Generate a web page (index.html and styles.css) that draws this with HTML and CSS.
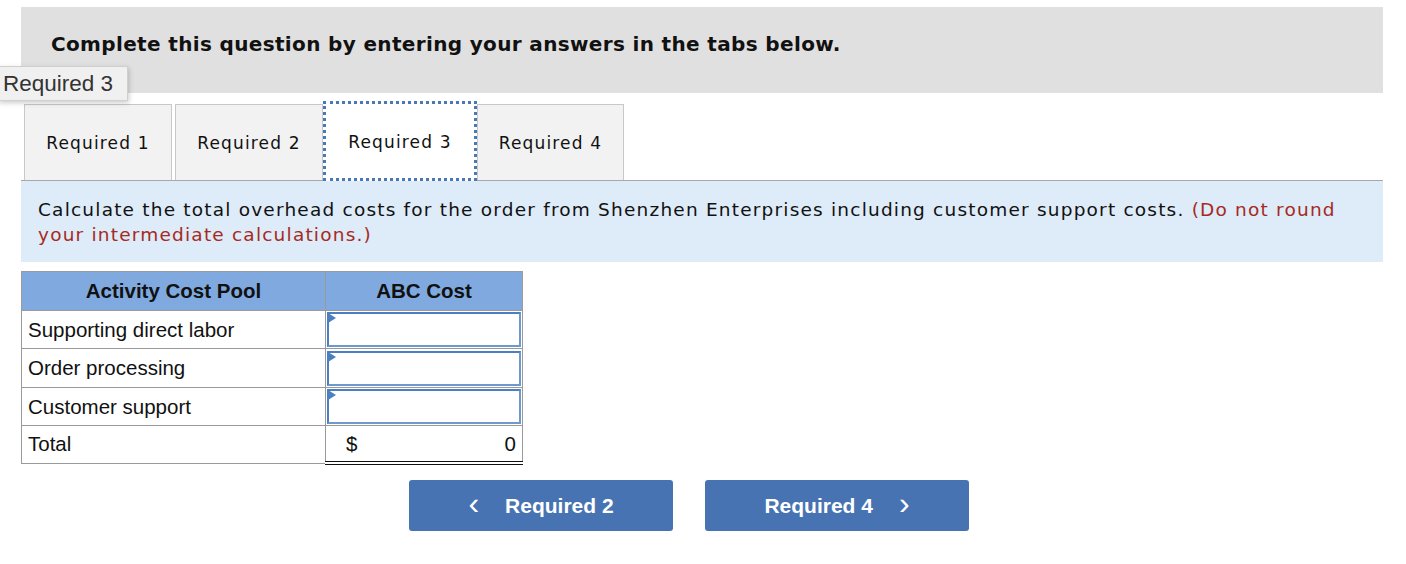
FILE: index.html
```html
<!DOCTYPE html>
<html>
<head>
<meta charset="utf-8">
<link rel="stylesheet" href="styles.css">
</head>
<body>
<div class="page">
  <div class="header">
    <h1 class="title">Complete this question by entering your answers in the tabs below.</h1>
  </div>
  <div class="tabs">
    <div class="tab">Required 1</div>
    <div class="tab">Required 2</div>
    <div class="tab active">Required 3</div>
    <div class="tab last">Required 4</div>
  </div>
  <div class="prompt">
    <p class="ptext">Calculate the total overhead costs for the order from Shenzhen Enterprises including customer support costs. <span class="note">(Do not round your intermediate calculations.)</span></p>
  </div>
  <table class="grid">
    <thead>
      <tr><th class="c1">Activity Cost Pool</th><th class="c2">ABC Cost</th></tr>
    </thead>
    <tbody>
      <tr class="r38"><td class="label">Supporting direct labor</td><td class="entry"><div class="box"><span class="flag"></span></div></td></tr>
      <tr class="r39"><td class="label">Order processing</td><td class="entry"><div class="box"><span class="flag"></span></div></td></tr>
      <tr class="r38"><td class="label">Customer support</td><td class="entry"><div class="box"><span class="flag"></span></div></td></tr>
      <tr class="rt"><td class="label">Total</td><td class="total"><div class="tot"><span>$</span><span>0</span></div></td></tr>
    </tbody>
  </table>
  <div class="nav">
    <button class="btn"><span class="chev">&lsaquo;</span><span>Required 2</span></button>
    <button class="btn"><span>Required 4</span><span class="chev">&rsaquo;</span></button>
  </div>
</div>
<div class="tooltip">Required 3</div>
</body>
</html>
```

FILE: styles.css
```css
html, body { margin: 0; padding: 0; background: #fff; }
body { position: relative; width: 1406px; height: 564px; overflow: hidden; }
.page { padding: 7px 23px 0 21px; }
.header { height: 86px; background: #e0e0e0; padding-left: 30px; box-sizing: border-box; padding-top: 25px; }
.title { margin: 0; font-family: "DejaVu Sans", Verdana, sans-serif; font-weight: bold; font-size: 20px; letter-spacing: 0.35px; color: #111; line-height: 24px; }
.tabs { display: flex; padding-left: 3px; margin-top: 11px; height: 76px; }
.tab { width: 148px; margin-right: 3px; box-sizing: border-box; border: 1px solid #c8c8c8; border-bottom: none; background: #f2f2f2; display: flex; align-items: center; justify-content: center; font-family: "DejaVu Sans", Verdana, sans-serif; font-size: 17px; letter-spacing: 1.15px; color: #111; }
.tab.active { background: #fff; border: 3px dotted #4a77b8; width: 154px; margin: -3px 0 -1px -3px; height: 80px; padding-top: 2px; position: relative; z-index: 1; }
.tab.last { width: 147px; }
.prompt { background: #deebf8; border-top: 1px solid #a8a8a8; padding: 16px 40px 10px 17px; height: 82px; box-sizing: border-box; }
.ptext { margin: 0; font-family: "DejaVu Sans", Verdana, sans-serif; font-size: 18.5px; letter-spacing: 1.2px; line-height: 25px; color: #111; }
.note { color: #a52a21; }
.grid { margin-top: 9px; border-collapse: collapse; font-family: "Liberation Sans", Arial, sans-serif; font-size: 20.5px; color: #111; }
.grid th { background: #80aadf; font-weight: bold; height: 38px; border: 1px solid #9a9a9a; padding: 0; }
.c1 { width: 303px; }
.c2 { width: 196px; }
.grid td { border: 1px solid #9a9a9a; padding: 0; }
.r38 td { height: 37px; }
.r39 td { height: 38px; }
.rt td { height: 35px; }
.label { padding-left: 6px !important; }
.entry { position: relative; }
.box { height: 35px; margin: 1px; border: 2px solid #4a7fc1; border-color: #4a7fc1 #6f98cc #6f98cc #4a7fc1; background: #fff; position: relative; box-sizing: border-box; }
.flag { position: absolute; left: -1px; top: -1px; width: 0; height: 0; border-left: 8px solid #4a7fc1; border-top: 5px solid transparent; border-bottom: 5px solid transparent; }
.total { border-bottom: 4px double #111 !important; }
.tot { display: flex; justify-content: space-between; padding: 0 6px 0 20px; }
.nav { display: flex; gap: 32px; margin-top: 15px; padding-left: 388px; }
.btn { width: 264px; height: 51px; border: none; border-radius: 3px; background: #4873b3; color: #fff; font-family: "Liberation Sans", Arial, sans-serif; font-weight: bold; font-size: 21px; display: flex; align-items: center; justify-content: center; gap: 26px; padding: 0; }
.chev { font-weight: normal; font-size: 32px; line-height: 20px; margin-top: -5px; }
.tooltip { position: absolute; left: -2px; top: 66px; height: 35px; padding: 0 12px 0 4px; background: #f0f0f0; border: 1px solid #cfcfcf; box-shadow: 1px 2px 5px rgba(0,0,0,0.2); font-family: "Liberation Sans", Arial, sans-serif; font-size: 22.5px; line-height: 34px; color: #333; box-sizing: border-box; width: 130px; white-space: nowrap; }
```
